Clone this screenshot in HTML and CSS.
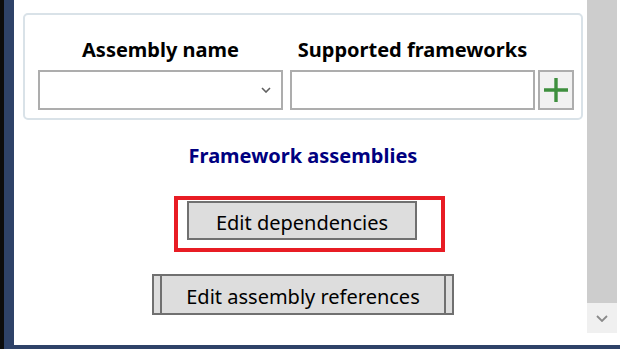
FILE: index.html
```html
<!DOCTYPE html>
<html>
<head>
<meta charset="utf-8">
<link rel="stylesheet" href="styles.css">
</head>
<body>
<div class="window">
  <div class="edge-black"></div>
  <div class="edge-blue"></div>
  <div class="client">
    <div class="main">
      <div class="content">
        <div class="group">
          <div class="grid">
            <div class="hdr">Assembly name</div>
            <div class="hdr">Supported frameworks</div>
            <div class="spacer"></div>
            <div class="combo">
              <svg class="chev" width="10" height="6" viewBox="0 0 10 6"><path d="M1 1 L5 5 L9 1" fill="none" stroke="#606060" stroke-width="1.6"/></svg>
            </div>
            <div class="textbox"></div>
            <div class="addbtn">
              <svg width="26" height="26" viewBox="0 0 26 26"><path d="M13 1 V25 M1 13 H25" stroke="#3e8f3e" stroke-width="3.4"/></svg>
            </div>
          </div>
        </div>
        <div class="title">Framework assemblies</div>
        <div class="btnrow first">
          <div class="btn dep">Edit dependencies<span class="highlight"></span></div>
        </div>
        <div class="btnrow">
          <div class="btn refs"><span class="sep"></span><span class="lbl">Edit assembly references</span><span class="sep"></span></div>
        </div>
      </div>
      <div class="scrollbar">
        <div class="thumb"></div>
        <div class="arrow">
          <svg width="12" height="7" viewBox="0 0 12 7"><path d="M1 1 L6 6 L11 1" fill="none" stroke="#8a8a8a" stroke-width="1.8"/></svg>
        </div>
        <div class="rest"></div>
      </div>
      <div class="edge-right"></div>
    </div>
    <div class="edge-bottom"></div>
  </div>
</div>
</body>
</html>
```

FILE: styles.css
```css
html, body {
  margin: 0;
  padding: 0;
  background: #ffffff;
}
body {
  font-family: "Noto Sans", "Noto Sans CJK KR", sans-serif;
  color: #000;
}
.window {
  display: flex;
  width: 620px;
  height: 349px;
  overflow: hidden;
}
.edge-black {
  width: 4px;
  flex: none;
  background: #0c0c0c;
}
.edge-blue {
  width: 10px;
  flex: none;
  background: #2e4268;
}
.client {
  flex: 1;
  min-width: 0;
  display: flex;
  flex-direction: column;
}
.main {
  flex: 1;
  display: flex;
  min-height: 0;
}
.edge-bottom {
  height: 4px;
  background: #2e4268;
}
.content {
  flex: 1;
  min-width: 0;
  padding: 13px 4px 0 9px;
  display: flex;
  flex-direction: column;
}
.group {
  height: 107px;
  box-sizing: border-box;
  border: 2px solid #d9e2e8;
  border-radius: 5px;
  padding: 0 3px 0 13px;
}
.grid {
  display: grid;
  grid-template-columns: 245px 245px 36px;
  grid-template-rows: 55px 40px;
  column-gap: 7px;
}
.hdr {
  font-weight: bold;
  font-size: 20px;
  text-align: center;
  line-height: 22px;
  padding-top: 24px;
  white-space: nowrap;
}
.combo, .textbox, .addbtn {
  box-sizing: border-box;
  border: 2px solid #adadad;
  height: 40px;
}
.combo {
  background: #fff;
  display: flex;
  align-items: center;
  justify-content: flex-end;
  padding-right: 10px;
}
.textbox {
  background: #fff;
}
.addbtn {
  margin-left: -4px;
  width: 36px;
  background: #f1f1f1;
  display: flex;
  align-items: center;
  justify-content: center;
}
.title {
  text-align: center;
  color: #000080;
  font-weight: bold;
  font-size: 20px;
  line-height: 24px;
  margin-top: 24px;
}
.btnrow {
  display: flex;
  justify-content: center;
}
.btnrow.first {
  margin-top: 33px;
}
.btnrow + .btnrow {
  margin-top: 34px;
}
.btn {
  position: relative;
  box-sizing: border-box;
  background: #dddddd;
  border: 2px solid #707070;
  font-size: 20px;
  display: flex;
  align-items: center;
  justify-content: center;
  white-space: nowrap;
}
.btn.dep {
  width: 230px;
  height: 39px;
  margin-left: -2px;
  padding-top: 3px;
}
.btn.refs {
  width: 302px;
  height: 41px;
  justify-content: space-between;
}
.btn.refs .lbl {
  padding-top: 4px;
}
.btn.refs .sep {
  align-self: stretch;
  width: 6px;
  border-right: 2px solid #707070;
}
.btn.refs .sep:last-child {
  border-right: none;
  border-left: 2px solid #707070;
}
.highlight {
  position: absolute;
  left: -15px;
  top: -7px;
  right: -30px;
  bottom: -14px;
  border: 4px solid #e81c24;
}
.scrollbar {
  width: 30px;
  flex: none;
  display: flex;
  flex-direction: column;
}
.thumb {
  height: 303px;
  background: #cdcdcd;
}
.arrow {
  height: 30px;
  background: #f0f0f0;
  display: flex;
  align-items: center;
  justify-content: center;
}
.rest {
  flex: 1;
  background: #fff;
}
.edge-right {
  width: 3px;
  flex: none;
  background: #fff;
}
```
